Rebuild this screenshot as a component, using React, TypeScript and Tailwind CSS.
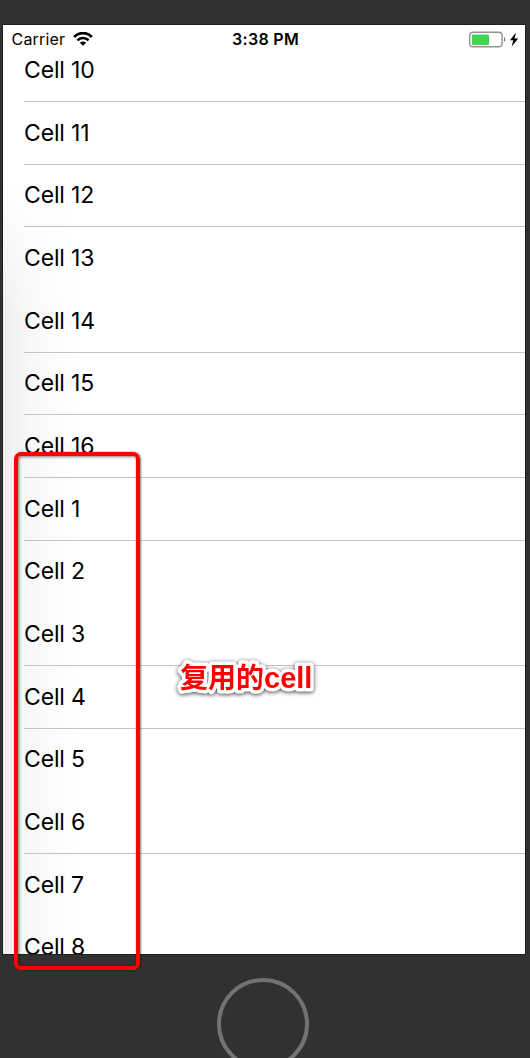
import React from "react";

type Cell = { label: string; line: boolean };

const cells: Cell[] = [
  { label: "Cell 10", line: true },
  { label: "Cell 11", line: true },
  { label: "Cell 12", line: true },
  { label: "Cell 13", line: false },
  { label: "Cell 14", line: true },
  { label: "Cell 15", line: true },
  { label: "Cell 16", line: true },
  { label: "Cell 1", line: true },
  { label: "Cell 2", line: false },
  { label: "Cell 3", line: true },
  { label: "Cell 4", line: true },
  { label: "Cell 5", line: false },
  { label: "Cell 6", line: true },
  { label: "Cell 7", line: false },
  { label: "Cell 8", line: false },
];

function WifiIcon() {
  return (
    <svg className="ml-[8px] h-[14px] w-[20px]" viewBox="0 0 20 14" fill="none" stroke="#000">
      <path d="M1.2 4.9C6.1-.1 13.9-.1 18.8 4.9" strokeWidth="2.9" />
      <path d="M4.4 8.3C7.5 5.2 12.5 5.2 15.6 8.3" strokeWidth="2.6" />
      <path d="M10 13.8L6.8 10.7C8.6 9 11.4 9 13.2 10.7Z" fill="#000" stroke="none" />
    </svg>
  );
}

function BatteryIcon() {
  return (
    <svg className="h-[17px] w-[50px]" viewBox="0 0 50 17">
      <rect x="0.7" y="1.2" width="32.4" height="14.6" rx="3.4" fill="#fff" stroke="#929292" strokeWidth="1.4" />
      <rect x="3" y="3.5" width="17" height="10.5" rx="0.8" fill="#43d551" />
      <path d="M35 6C36.8 6.9 36.8 10.1 35 11Z" fill="#777" />
      <path d="M46.9 1.6L41 9.2h3.2L42.8 15.4 49.2 7.6h-3.6Z" fill="#000" />
    </svg>
  );
}

function StatusBar() {
  return (
    <div className="relative z-10 grid h-[28px] grid-cols-3 items-center text-black">
      <div className="flex items-center pl-[8.5px]">
        <span className="text-[16px] leading-[20px] tracking-[0.2px]">Carrier</span>
        <WifiIcon />
      </div>
      <div className="pl-[3px] text-center text-[16px] font-semibold leading-[20px] tracking-[0.3px]">3:38 PM</div>
      <div className="flex justify-end pr-[6px]">
        <BatteryIcon />
      </div>
    </div>
  );
}

export default function App() {
  return (
    <div className="relative h-[1058px] w-[530px] overflow-hidden bg-[#313131] pl-[3px] pt-[25px] font-['Inter','Liberation_Sans',sans-serif]">
      <div className="h-[929px] w-[522px] overflow-hidden bg-white shadow-[0_0_0_1px_#1f1f1f]">
        <div className="relative">
          <div className="absolute left-0 top-[155px] h-[774px] w-[75px] bg-linear-to-r from-[#eeeeee] via-[#f8f8f8] via-35% to-white [mask-image:linear-gradient(to_bottom,transparent,black_140px)]" />
          <StatusBar />
          <div className="relative -mt-[13.7px]">
            {cells.map((cell) => (
              <div key={cell.label} className="flex h-[62.67px] pl-[21px]">
                <div
                  className={`flex flex-1 items-center border-b text-[23px] leading-[28px] tracking-[-0.15px] text-black ${
                    cell.line ? "border-[#c4c4c8]" : "border-transparent"
                  }`}
                >
                  {cell.label}
                </div>
              </div>
            ))}
          </div>
        </div>
      </div>

      <div className="ml-[214px] mt-[24px] h-[92px] w-[92px] rounded-full border-[4px] border-[#737373]" />

      <div className="absolute left-[14px] top-[452px] h-[518px] w-[126px] rounded-[7px] border-4 border-[#ff0000] shadow-[1px_0px_2px_rgba(0,0,0,0.5),inset_1px_1px_3px_rgba(0,0,0,0.5)]" />

      <svg
        className="absolute left-[170px] top-[655px] h-[50px] w-[155px] [filter:drop-shadow(0_1px_2px_rgba(0,0,0,0.75))]"
        viewBox="0 0 155 50"
      >
        <text
          x="10"
          y="33"
          className="fill-[#ff0000] stroke-white font-['Liberation_Sans','Noto_Sans_CJK_SC',sans-serif] text-[28px] font-bold [paint-order:stroke] [stroke-linejoin:round] [stroke-width:7px]"
        >
          复用的<tspan className="text-[29px]">cell</tspan>
        </text>
      </svg>
    </div>
  );
}
